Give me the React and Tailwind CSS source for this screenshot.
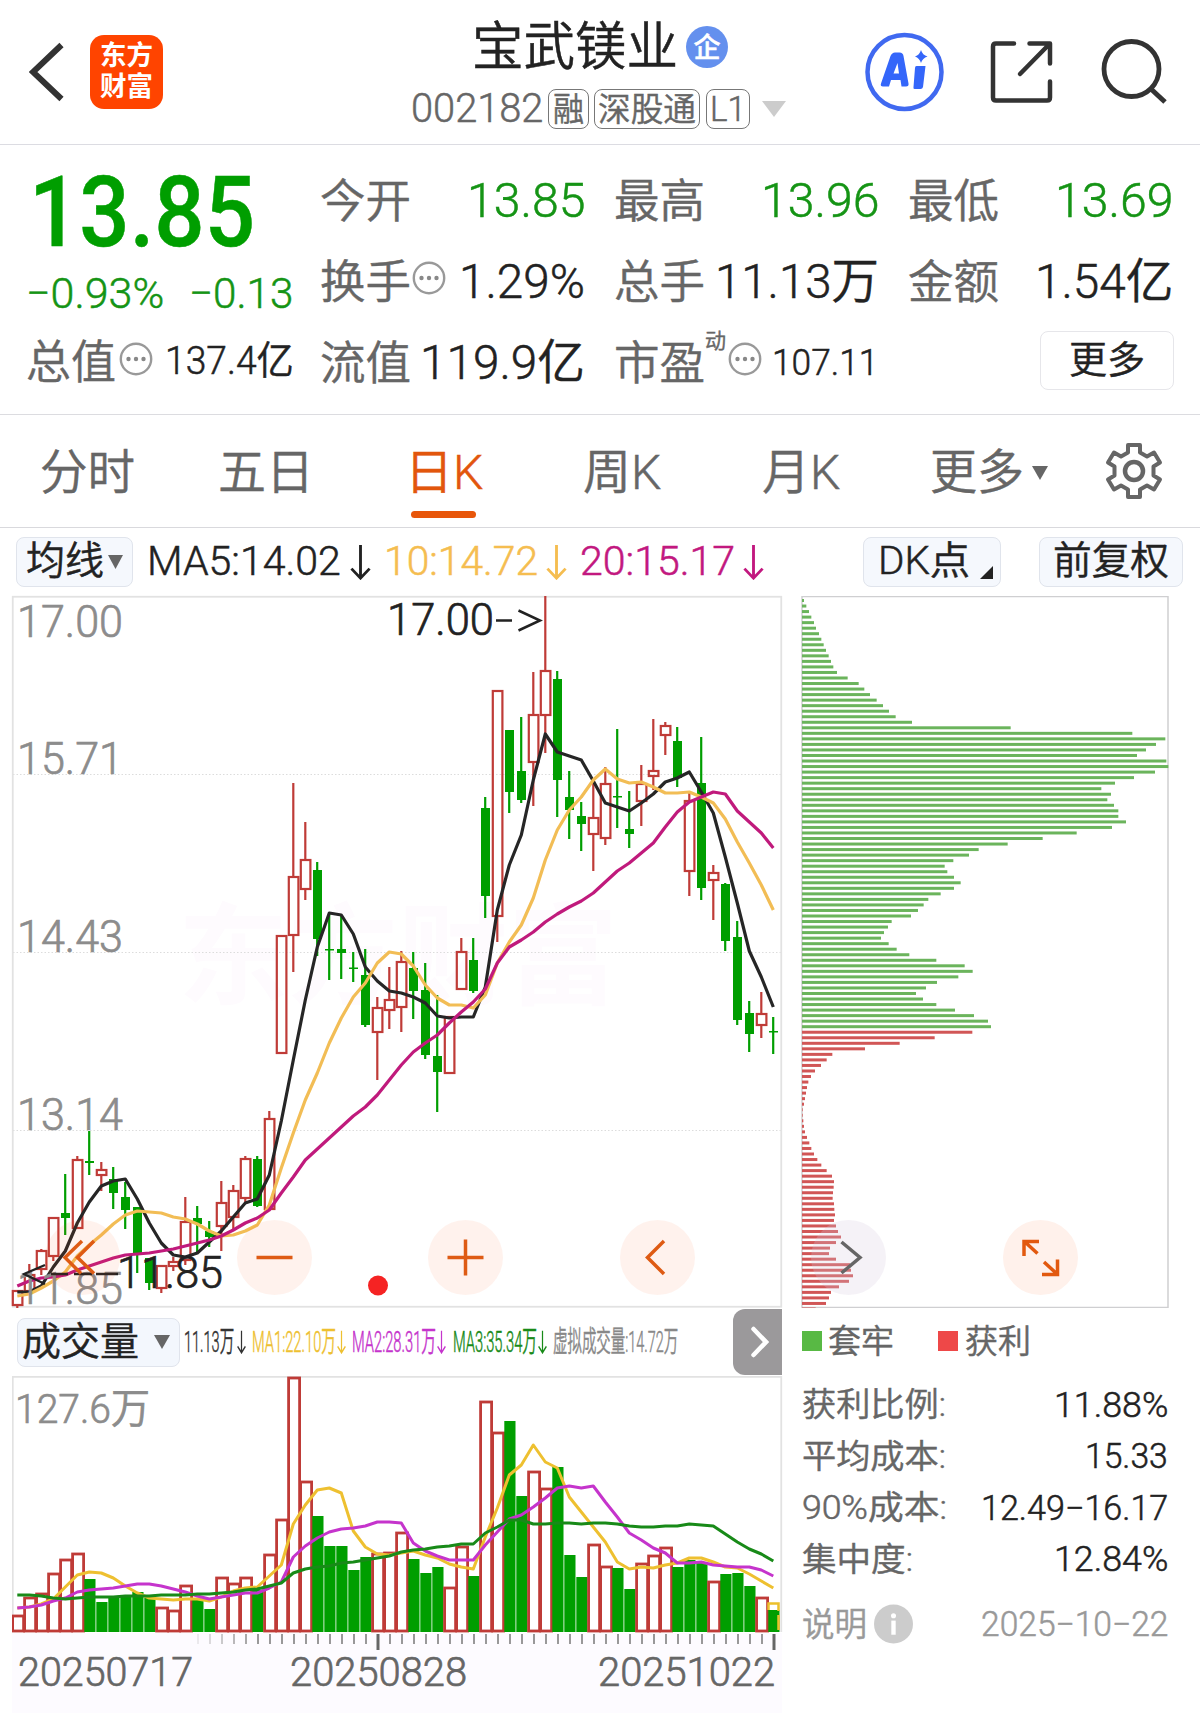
import React, { useLayoutEffect, useRef } from 'react';

// [direction, body top, body bottom, wick top, wick bottom]
const CANDLES = [
    ['r', 1291, 1305, 1290, 1308], ['r', 1275, 1291, 1264, 1293], ['r', 1251, 1269, 1249, 1275], ['r', 1218, 1256, 1218, 1261],
    ['g', 1213, 1218, 1174, 1235], ['r', 1160, 1228, 1156, 1228], ['g', 1161, 1163, 1131, 1175], ['r', 1170, 1175, 1162, 1191],
    ['g', 1179, 1193, 1167, 1209], ['g', 1197, 1210, 1182, 1229], ['g', 1207, 1255, 1207, 1273], ['g', 1258, 1283, 1258, 1290],
    ['r', 1266, 1288, 1266, 1293], ['r', 1262, 1266, 1257, 1271], ['r', 1222, 1260, 1197, 1265], ['g', 1218, 1224, 1206, 1253],
    ['g', 1231, 1237, 1221, 1247], ['r', 1203, 1226, 1181, 1251], ['r', 1191, 1217, 1185, 1229], ['r', 1159, 1198, 1156, 1202],
    ['g', 1159, 1206, 1156, 1207], ['r', 1119, 1209, 1111, 1209], ['r', 936, 1053, 936, 1053], ['r', 877, 935, 783, 972],
    ['r', 860, 889, 822, 900], ['g', 870, 939, 862, 956], ['g', 949, 950, 913, 980], ['g', 949, 953, 915, 979],
    ['g', 967.5, 969, 952, 982], ['g', 975, 1025, 949, 1027], ['r', 1008, 1032, 997, 1080], ['r', 1000, 1010, 967, 1029],
    ['r', 962, 1007, 951, 1032], ['g', 968, 991, 952, 1019], ['g', 990, 1055, 963, 1059], ['g', 1056, 1072, 995, 1112],
    ['r', 1017, 1073, 1017, 1073], ['r', 952, 989, 938, 989], ['g', 960, 991, 938, 993], ['g', 808, 896, 797, 918],
    ['r', 691, 916, 691, 942], ['g', 730, 792, 730, 813], ['g', 771, 800, 717, 803], ['r', 715, 762, 672, 806],
    ['r', 671, 715, 596, 753], ['g', 679, 780, 671, 817], ['g', 797, 810, 771, 839], ['g', 816, 824, 802, 851],
    ['r', 818, 834, 778, 871], ['r', 784, 838, 767, 845], ['g', 796, 797.5, 729, 828], ['g', 829, 834, 791, 848],
    ['r', 784, 801, 765, 826], ['r', 771, 776, 719, 790], ['r', 726, 735, 722, 755], ['g', 741, 778, 727, 787],
    ['r', 801, 871, 793, 896], ['g', 783, 888, 737, 900], ['r', 873, 880, 865, 920], ['g', 884, 941, 883, 951],
    ['g', 937, 1020, 921, 1025], ['g', 1013, 1034, 1001, 1052], ['r', 1014, 1025, 992, 1038], ['g', 1031, 1032.5, 1017, 1054],
];

const MA5 = [1292, 1292, 1286, 1267, 1251, 1223, 1202, 1186, 1181, 1179, 1199, 1223, 1243, 1255, 1257, 1253, 1242, 1231, 1217, 1203, 1199, 1175, 1121, 1060, 1000, 947, 913, 915, 934, 967, 981, 991, 993, 997, 1003, 1016, 1018, 1017, 1017, 987, 910, 865, 835, 780, 734, 752, 756, 760, 781, 803, 807, 811, 803, 794, 782, 778, 772, 792, 813, 857, 903, 951, 977, 1007];
const MA10 = [1296, 1294, 1288, 1281, 1272, 1256, 1245, 1235, 1224, 1215, 1211, 1212, 1213, 1217, 1219, 1224, 1231, 1236, 1235, 1231, 1225, 1205, 1168, 1133, 1100, 1073, 1043, 1018, 997, 983, 963, 952, 954, 966, 985, 998, 1005, 1005, 1008, 995, 963, 942, 925, 898, 860, 830, 810, 797, 780, 769, 779, 783, 782, 787, 793, 793, 792, 797, 803, 819, 842, 863, 885, 910];
const MA20 = [1286, 1281, 1278, 1277, 1275, 1270, 1266, 1262, 1258, 1255, 1254, 1253, 1251, 1249, 1246, 1243, 1240, 1236, 1230, 1223, 1218, 1210, 1193, 1177, 1160, 1149, 1138, 1127, 1116, 1107, 1095, 1080, 1065, 1052, 1043, 1035, 1023, 1012, 1002, 989, 963, 947, 940, 932, 922, 914, 907, 901, 893, 882, 871, 863, 853, 843, 827, 812, 802, 797, 792, 794, 811, 822, 833, 848];

const VOLUME_TOPS = [1615, 1597, 1593, 1573, 1559, 1553, 1579, 1602, 1598, 1597, 1592, 1598, 1607, 1610, 1585, 1600, 1609, 1577, 1583, 1577, 1590, 1554, 1519, 1377, 1481, 1516, 1546, 1546, 1570, 1557, 1553, 1552, 1532, 1559, 1573, 1567, 1587, 1546, 1576, 1401, 1432, 1421, 1496, 1471, 1488, 1467, 1555, 1577, 1544, 1566, 1568, 1589, 1563, 1555, 1547, 1567, 1560, 1563, 1581, 1574, 1573, 1586, 1597, 1610];
const VOLUME_DIRS = 'rrrrrrggggggrrrggrrrgrrrrgggggrrrgggrrgrrggrrgggrrggrrrgggrgggrg';

const VMA1 = [1608, 1607, 1604, 1599, 1587, 1575, 1572, 1573, 1578, 1586, 1593, 1598, 1599, 1600, 1599, 1599, 1601, 1597, 1591, 1588, 1587, 1576, 1565, 1524, 1505, 1490, 1488, 1493, 1531, 1547, 1554, 1555, 1553, 1551, 1555, 1558, 1564, 1567, 1569, 1537, 1508, 1475, 1465, 1445, 1462, 1468, 1497, 1512, 1527, 1542, 1562, 1569, 1567, 1568, 1565, 1563, 1558, 1558, 1562, 1567, 1568, 1574, 1581, 1588];
const VMA2 = [1608, 1607, 1605, 1601, 1598, 1592, 1590, 1589, 1588, 1586, 1584, 1584, 1586, 1589, 1592, 1596, 1599, 1597, 1595, 1593, 1593, 1588, 1582, 1557, 1546, 1538, 1532, 1529, 1528, 1526, 1522, 1522, 1523, 1543, 1551, 1556, 1560, 1560, 1560, 1545, 1532, 1519, 1515, 1507, 1498, 1488, 1486, 1488, 1486, 1502, 1517, 1533, 1540, 1548, 1553, 1563, 1563, 1562, 1565, 1566, 1567, 1567, 1570, 1576];
const VMA3 = [1595, 1595, 1596, 1598, 1599, 1598, 1597, 1597, 1597, 1596, 1596, 1596, 1595, 1595, 1595, 1594, 1594, 1593, 1592, 1590, 1589, 1586, 1583, 1573, 1569, 1567, 1566, 1563, 1562, 1560, 1558, 1556, 1552, 1550, 1549, 1547, 1546, 1544, 1544, 1533, 1527, 1520, 1520, 1524, 1524, 1523, 1523, 1524, 1523, 1523, 1524, 1526, 1527, 1527, 1526, 1526, 1524, 1525, 1526, 1534, 1542, 1549, 1554, 1561];

const CHIPS = [
    42, 49, 57, 64, 72, 78, 87, 94, 101, 108, 116, 123, 130, 141, 173, 206, 223, 240, 260, 279, 297, 317, 366, 662,
    1027, 1126, 1098, 1068, 1041, 1129, 1135, 1095, 1032, 975, 934, 963, 952, 972, 985, 985, 1008, 966, 860, 758, 653,
    566, 537, 490, 464, 472, 492, 512, 492, 452, 415, 401, 384, 363, 305, 294, 282, 273, 296, 320, 358, 439, 524, 548,
    505, 441, 408, 378, 399, 439, 495, 552, 594, 603, 547, 434, 329, 225, 127, 110, 93, 75, 63, 55, 51, 48, 45, 42, 38,
    38, 40, 42, 45, 51, 58, 64, 72, 82, 94, 110, 126, 132, 131, 129, 128, 132, 133, 135, 132, 138, 144, 153, 138, 120,
    117, 138, 180, 183, 189, 177, 147, 123, 117, 108, 77,
];
const TRAPPED_COUNT = 78;

const RED = '#bf3b37';
const GREEN = '#009e00';

const candleX = (i) => 17.3 + i * 12;
const toPoints = (values) => values.map((y, i) => `${candleX(i)},${y}`).join(' ');

// Squeezes or stretches one line of text to the width of its box
const Fit = ({ className = '', children }) => {
    const box = useRef(null);
    const text = useRef(null);

    useLayoutEffect(() => {
        const scale = box.current.clientWidth / text.current.offsetWidth;
        text.current.style.transform = `scaleX(${scale})`;
    }, [children]);

    return (
        <span ref={box} className={`block shrink-0 leading-none ${className}`}>
            <span ref={text} className="inline-block origin-left whitespace-nowrap">{children}</span>
        </span>
    );
};

const MoreDots = ({ className = '' }) => (
    <svg viewBox="0 0 34 34" className={`w-[34px] h-[34px] shrink-0 ${className}`}>
        <circle cx="17" cy="17" r="15.2" fill="none" stroke="#999" strokeWidth="2.4" />
        <circle cx="9.5" cy="17" r="2.2" fill="#888" />
        <circle cx="17" cy="17" r="2.2" fill="#888" />
        <circle cx="24.5" cy="17" r="2.2" fill="#888" />
    </svg>
);

const Caret = ({ className = '' }) => (
    <svg viewBox="0 0 16 14" preserveAspectRatio="none" className={`shrink-0 ${className}`}>
        <path d="M0 0H16L8 14Z" fill="currentColor" />
    </svg>
);

const DownArrow = ({ className = '' }) => (
    <svg viewBox="0 0 22 38" preserveAspectRatio="none" className={`shrink-0 ${className}`}>
        <path d="M11 1V36M1.5 26L11 36L20.5 26" fill="none" stroke="currentColor" strokeWidth="3" />
    </svg>
);

const Header = () => (
    <header className="flex h-[145px] border-b border-[#dcdce2]">
        <div className="flex items-start w-[411px] pl-[29px] shrink-0">
            <svg viewBox="0 0 36 60" className="w-[36px] h-[60px] mt-[42px]">
                <path d="M32.500 3L4 30L32.500 57" fill="none" stroke="#333" strokeWidth="6" />
            </svg>
            <div className="ml-[25px] mt-[35px] w-[73px] h-[74px] rounded-[14px] bg-[#ff4400] text-white font-bold text-[27px] [-webkit-text-stroke:0px] flex flex-col items-center justify-center gap-[4px]">
                <Fit className="w-[53px]">东方</Fit>
                <Fit className="w-[53px]">财富</Fit>
            </div>
        </div>

        <div className="w-[378px] shrink-0">
            <div className="flex items-center pl-[61px] mt-[19px] h-[56px]">
                <Fit className="w-[206px] text-[52px] text-[#222] mt-[1px]">宝武镁业</Fit>
                <div className="ml-[8px] w-[42px] h-[42px] rounded-full bg-[#6490ee] text-white text-[27px] font-medium flex items-center justify-center leading-none">
                    <span className="mt-[2px]">企</span>
                </div>
            </div>
            <div className="flex items-center mt-[14px] h-[40px] text-[#666]">
                <Fit className="w-[132px] text-[41px] -mt-[2px]">002182</Fit>
                <div className="ml-[5px] w-[41px] h-[40px] border border-[#777] rounded-[8px] flex items-center justify-center text-[33px]">
                    <Fit className="w-[31px]">融</Fit>
                </div>
                <div className="ml-[5px] w-[106px] h-[40px] border border-[#777] rounded-[8px] flex items-center justify-center text-[33px]">
                    <Fit className="w-[98px]">深股通</Fit>
                </div>
                <div className="ml-[6px] w-[44px] h-[40px] border border-[#777] rounded-[8px] flex items-center justify-center text-[35px]">
                    <Fit className="w-[36px]">L1</Fit>
                </div>
                <Caret className="ml-[12px] w-[24px] h-[16px] text-[#ccc]" />
            </div>
        </div>

        <div className="flex items-start pl-[76px]">
            <svg viewBox="0 0 80 80" className="w-[80px] h-[80px] mt-[32px]">
                <circle cx="39.500" cy="40" r="37" fill="none" stroke="#4069f0" strokeWidth="4.500" />
                <path fillRule="evenodd" d="M16 51.500L25.500 24Q27 20.500 30 20.500H34.500Q38 20.500 38.500 24L43.500 51.500Q44 54.500 41 54.500H36.500L35.500 48H26L24 54.500H18Q15 54.500 16 51.500ZM28.500 41.500H34L32.500 31Z" fill="#3466fa" />
                <path d="M51.500 34H60.500L58 55Q57.500 57 55.500 57H49.500Q48 57 48.500 55L50 36Q50 34 51.500 34Z" fill="#3466fa" />
                <path d="M56 18Q57.500 23 62.500 24.500Q57.500 26 56 31Q54.500 26 50 24.500Q54.500 23 56 18Z" fill="#3466fa" />
            </svg>
            <svg viewBox="0 0 64 64" className="w-[64px] h-[64px] mt-[40px] ml-[45px]">
                <g fill="none" stroke="#333" strokeWidth="4.500" strokeLinecap="round" strokeLinejoin="round">
                    <path d="M24 3.500H6Q3 3.500 3 6.500V57.500Q3 60.500 6 60.500H57Q60 60.500 60 57.500V41.500" />
                    <path d="M39.500 3.500H60V23.500M59 4.500L30 34" />
                </g>
            </svg>
            <svg viewBox="0 0 68 68" className="w-[68px] h-[68px] mt-[37px] ml-[46px]">
                <circle cx="31.500" cy="32" r="27.500" fill="none" stroke="#333" strokeWidth="4.800" />
                <path d="M51 52L65 65" fill="none" stroke="#333" strokeWidth="5" />
            </svg>
        </div>
    </header>
);

const Cell = ({ children }) => (
    <div className="flex items-center w-[265px] h-[81px] text-[46px] text-[#666]">{children}</div>
);

const Quote = () => (
    <section className="flex h-[270px] pt-[15px] border-b border-[#dcdce0]">
        <div className="w-[320px] shrink-0">
            <div className="h-[106px] flex items-center pl-[29px] text-[#009e00]">
                <Fit className="w-[226px] text-[98px] font-medium">13.85</Fit>
            </div>
            <div className="h-[55px] flex items-center pl-[26px] text-[43px] text-[#159415]">
                <Fit className="w-[138px]">−0.93%</Fit>
                <Fit className="w-[104px] ml-[25px]">−0.13</Fit>
            </div>
            <div className="h-[81px] flex items-center pl-[26px] text-[#666]">
                <Fit className="w-[90px] text-[46px]">总值</Fit>
                <MoreDots className="ml-[3px] -mt-[6px]" />
                <Fit className="w-[129px] ml-[12px] text-[39px] text-[#222]">137.4亿</Fit>
            </div>
        </div>

        <div className="grid grid-cols-[294px_294px_294px] content-start">
            <Cell>
                <Fit className="w-[91px]">今开</Fit>
                <Fit className="w-[118px] ml-auto text-[49px] text-[#159415]">13.85</Fit>
            </Cell>
            <Cell>
                <Fit className="w-[91px]">最高</Fit>
                <Fit className="w-[118px] ml-auto text-[49px] text-[#159415]">13.96</Fit>
            </Cell>
            <Cell>
                <Fit className="w-[91px]">最低</Fit>
                <Fit className="w-[118px] ml-auto text-[49px] text-[#159415]">13.69</Fit>
            </Cell>
            <Cell>
                <Fit className="w-[91px]">换手</Fit>
                <MoreDots className="ml-[1px] -mt-[8px]" />
                <Fit className="w-[126px] ml-auto text-[48px] text-[#222]">1.29%</Fit>
            </Cell>
            <Cell>
                <Fit className="w-[91px]">总手</Fit>
                <Fit className="w-[164px] ml-auto text-[48px] text-[#222]">11.13万</Fit>
            </Cell>
            <Cell>
                <Fit className="w-[91px]">金额</Fit>
                <Fit className="w-[138px] ml-auto text-[48px] text-[#222]">1.54亿</Fit>
            </Cell>
            <Cell>
                <Fit className="w-[91px]">流值</Fit>
                <Fit className="w-[165px] ml-auto text-[48px] text-[#222]">119.9亿</Fit>
            </Cell>
            <Cell>
                <Fit className="w-[91px]">市盈</Fit>
                <span className="text-[21px] leading-none self-start mt-[9px]">动</span>
                <MoreDots className="ml-[2px] -mt-[8px]" />
                <Fit className="w-[106px] ml-[10px] text-[37px] text-[#222]">107.11</Fit>
            </Cell>
            <div className="flex items-center h-[81px] pl-[132px]">
                <button className="w-[134px] h-[59px] -mt-[5px] border border-[#e6e6ea] rounded-[8px] text-[38px] text-[#222] flex items-center justify-center">
                    <Fit className="w-[76px]">更多</Fit>
                </button>
            </div>
        </div>
    </section>
);

const Tabs = () => (
    <nav className="flex h-[113px] border-b border-[#d9d9dd] text-[48px] text-[#666] pl-[40px]">
        <div className="w-[178px] pt-[34px]"><Fit className="w-[95px]">分时</Fit></div>
        <div className="w-[187px] pt-[34px]"><Fit className="w-[96px]">五日</Fit></div>
        <div className="w-[178px] pt-[34px] text-[#e2560c]">
            <Fit className="w-[78px]">日K</Fit>
            <div className="w-[65px] h-[7px] mt-[14px] ml-[6px] rounded-full bg-[#e8560a]"></div>
        </div>
        <div className="w-[179px] pt-[34px]"><Fit className="w-[78px]">周K</Fit></div>
        <div className="w-[168px] pt-[34px]"><Fit className="w-[78px]">月K</Fit></div>
        <div className="w-[174px] pt-[34px] flex items-start">
            <Fit className="w-[94px]">更多</Fit>
            <Caret className="w-[16px] h-[14px] mt-[17px] ml-[8px]" />
        </div>
        <svg viewBox="-30 -30 60 60" className="w-[60px] h-[60px] mt-[26px]">
            <path d="M-6 -26H6V-18.500L13 -14.500L20 -18.500L26 -8.500L19.500 -4.500V4.500L26 8.500L20 18.500L13 14.500L6 18.500V26H-6V18.500L-13 14.500L-20 18.500L-26 8.500L-19.500 4.500V-4.500L-26 -8.500L-20 -18.500L-13 -14.500L-6 -18.500Z" fill="none" stroke="#666" strokeWidth="4" strokeLinejoin="round" />
            <circle r="9" fill="none" stroke="#666" strokeWidth="4.5" />
        </svg>
    </nav>
);

const Indicators = () => (
    <div className="flex items-center h-[68px] pl-[16px] pb-[1px] text-[40px] text-[#222]">
        <button className="w-[117px] h-[50px] border border-[#e0e4ec] rounded-[8px] bg-[#f5f8fd] flex items-center pl-[9px] text-[39px]">
            <Fit className="w-[78px]">均线</Fit>
            <Caret className="w-[15px] h-[14px] ml-[4px] text-[#666]" />
        </button>
        <Fit className="w-[194px] ml-[14px]">MA5:14.02</Fit>
        <DownArrow className="w-[21px] h-[36px] ml-[9px] mr-[13px]" />
        <Fit className="w-[154px] text-[#f5bd50]">10:14.72</Fit>
        <DownArrow className="w-[21px] h-[36px] ml-[8px] mr-[13px] text-[#f5bd50]" />
        <Fit className="w-[155px] text-[#c2187f]">20:15.17</Fit>
        <DownArrow className="w-[21px] h-[36px] ml-[8px] text-[#c2187f]" />
        <button className="w-[138px] h-[50px] ml-[99px] border border-[#e0e4ec] rounded-[8px] bg-[#f5f8fd] flex items-center pl-[13px] text-[39px]">
            <Fit className="w-[92px]">DK点</Fit>
            <svg viewBox="0 0 13 13" className="w-[13px] h-[13px] ml-[11px] mt-[22px]">
                <path d="M13 0V13H0Z" fill="#222" />
            </svg>
        </button>
        <button className="w-[144px] h-[50px] ml-[38px] border border-[#e0e4ec] rounded-[8px] bg-[#f5f8fd] flex items-center justify-center text-[39px]">
            <Fit className="w-[116px]">前复权</Fit>
        </button>
    </div>
);

const AxisLabel = ({ x = 17, y, width = 106, fill = '#8c8c8c', size = 43.5, children }) => (
    <text x={x} y={y} fontSize={size} fill={fill} stroke={fill} strokeWidth="0.7" textLength={width} lengthAdjust="spacingAndGlyphs">{children}</text>
);

const RoundButton = ({ className, children }) => (
    <button className={`absolute top-[624px] w-[75px] h-[75px] rounded-full bg-[#ff5a1e]/8 ${className}`}>
        <svg viewBox="0 0 75 75" className="w-full h-full" fill="none" stroke="#de5b14" strokeWidth="3.5">{children}</svg>
    </button>
);

const PriceChart = () => (
    <div className="relative h-[712px]">
        <svg viewBox="12 596 771 712" className="block w-[771px] h-[712px] overflow-visible">
            <text x="178" y="996" fontSize="110" fontWeight="bold" fill="#fefbfe" textLength="440">东方财富</text>
            {[774, 952, 1130].map((y) => (
                <path key={y} d={`M13 ${y}.500H781`} stroke="#dcdcdc" strokeDasharray="1.500 2" />
            ))}
            <rect x="12.750" y="596.750" width="768.500" height="710" fill="none" stroke="#e2e2e2" strokeWidth="1.800" />
            <AxisLabel y={637}>17.00</AxisLabel>
            <AxisLabel y={774}>15.71</AxisLabel>
            <AxisLabel y={952}>14.43</AxisLabel>
            <AxisLabel y={1130}>13.14</AxisLabel>

            {CANDLES.map(([dir, top, bottom, high, low], i) => {
                const x = candleX(i);
                if (dir === 'g') {
                    return (
                        <g key={i} fill={GREEN}>
                            <rect x={x - 1.200} y={high} width="2.200" height={low - high} />
                            <rect x={x - 4.300} y={top} width="9" height={Math.max(bottom - top, 1.500)} />
                        </g>
                    );
                }
                return (
                    <g key={i} stroke={RED} strokeWidth="2.200" fill="none">
                        <path d={`M${x} ${high}V${top}M${x} ${bottom}V${low}`} />
                        <rect x={x - 4.500} y={top} width="9.600" height={bottom - top} />
                    </g>
                );
            })}

            <g fill="none" strokeWidth="3.200" strokeLinejoin="round">
                <polyline points={toPoints(MA5)} stroke="#262626" />
                <polyline points={toPoints(MA10)} stroke="#f2bd55" />
                <polyline points={toPoints(MA20)} stroke="#c01a7c" />
            </g>

            <AxisLabel x={387} y={635} width={107} fill="#222">17.00</AxisLabel>
            <path d="M496 620.500H512M518.500 610.500L540 620.500L518.500 630.500" fill="none" stroke="#222" strokeWidth="2.500" />

            <AxisLabel y={1304}>11.85</AxisLabel>
            <AxisLabel x={117} y={1288} width={106} fill="#222">11.85</AxisLabel>
            <path d="M45 1265L24 1274L45 1284M51 1274H68M74 1274H92M96 1274H118" fill="none" stroke="#222" strokeWidth="2.300" />
            <circle cx="378" cy="1285.500" r="10" fill="#f52323" />
        </svg>

        <RoundButton className="left-[33px]">
            <path d="M37 21L20 37.500L36 53.500M49 21L32.500 37.500L49 53.500" />
        </RoundButton>
        <RoundButton className="left-[225px]">
            <path d="M19.500 37.500H55.500" />
        </RoundButton>
        <RoundButton className="left-[416px]">
            <path d="M19.500 37.500H55.500M37.500 19.500V55.500" />
        </RoundButton>
        <RoundButton className="left-[608px]">
            <path d="M44 21L27.500 37.500L44 54" />
        </RoundButton>
    </div>
);

const VolumeBar = () => (
    <div className="flex items-center h-[68px] pl-[5px] text-[29px]">
        <button className="w-[163px] h-[49px] border border-[#e0e4ec] rounded-[8px] bg-[#f3f7fd] flex items-center pl-[4px] text-[39px] text-[#222]">
            <Fit className="w-[117px]">成交量</Fit>
            <Caret className="w-[16px] h-[14px] ml-[15px] text-[#666]" />
        </button>
        <Fit className="w-[50px] ml-[4px] text-[#333]">11.13万</Fit>
        <DownArrow className="w-[9px] h-[24px] ml-[3px] text-[#333]" />
        <Fit className="w-[84px] ml-[6px] text-[#eec030]">MA1:22.10万</Fit>
        <DownArrow className="w-[9px] h-[24px] ml-[1px] text-[#eec030]" />
        <Fit className="w-[84px] ml-[6px] text-[#c534cc]">MA2:28.31万</Fit>
        <DownArrow className="w-[9px] h-[24px] ml-[1px] text-[#c534cc]" />
        <Fit className="w-[84px] ml-[7px] text-[#188a18]">MA3:35.34万</Fit>
        <DownArrow className="w-[9px] h-[24px] ml-[1px] text-[#188a18]" />
        <Fit className="w-[125px] ml-[6px] text-[#888]">虚拟成交量:14.72万</Fit>
        <div className="ml-auto mr-[1px] w-[49px] h-[66px] rounded-l-[12px] bg-[#9b999b] flex items-center justify-center pl-[4px]">
            <svg viewBox="0 0 18 32" className="w-[18px] h-[32px]">
                <path d="M2.500 3L15 16L2.500 29" fill="none" stroke="#fff" strokeWidth="4.500" strokeLinecap="round" />
            </svg>
        </div>
    </div>
);

const VolumeChart = () => (
    <svg viewBox="12 1376 771 337" className="block w-[771px] h-[337px]">
        <rect x="12" y="1633" width="770" height="80" fill="#fdfbff" />
        <path d="M12.750 1632V1376.750H781.250V1632" fill="none" stroke="#e2e2e2" strokeWidth="1.800" />
        <AxisLabel x={15} y={1423} size={41} width={135}>127.6万</AxisLabel>

        {VOLUME_TOPS.map((top, i) => {
            const x = candleX(i) - 5;
            if (VOLUME_DIRS[i] === 'g') {
                return <rect key={i} x={x} y={top} width="11.200" height={1632 - top} fill={GREEN} />;
            }
            return <rect key={i} x={x + 0.300} y={top + 1} width="11" height={1630 - top} fill="#fff" stroke={RED} strokeWidth="2.800" />;
        })}
        <path d="M768.500 1610V1603.500H778.500V1630" fill="none" stroke="#ecc02c" strokeWidth="2.500" strokeDasharray="24 4" />

        <g fill="none" strokeWidth="3" strokeLinejoin="round">
            <polyline points={toPoints(VMA1)} stroke="#eec030" />
            <polyline points={toPoints(VMA2)} stroke="#c534cc" />
            <polyline points={toPoints(VMA3)} stroke="#188a18" />
        </g>

        {Array.from({ length: 49 }, (_, n) => n + 15).map((i) => {
            const major = i === 30 || i === 63;
            return (
                <path
                    key={i}
                    d={`M${candleX(i) + 0.700} 1634V${major ? 1650 : 1644}`}
                    stroke={major ? '#666' : '#777'}
                    strokeWidth={major ? 3 : 1.500}
                    opacity={Math.min(1, (i - 14) / 6)}
                />
            );
        })}
        <AxisLabel x={18} y={1686} size={41} width={175} fill="#666">20250717</AxisLabel>
        <AxisLabel x={290} y={1686} size={41} width={177} fill="#666">20250828</AxisLabel>
        <AxisLabel x={598} y={1686} size={41} width={177} fill="#666">20251022</AxisLabel>
    </svg>
);

const ChipChart = () => (
    <div className="relative h-[712px]">
        <svg viewBox="801 596 368 712" className="block w-[368px] h-[712px]">
            <path d="M802 596.500H1168V1307.500H802Z" fill="none" stroke="#cfcfd1" strokeWidth="1.500" />
            {CHIPS.map((end, i) => (
                <rect
                    key={i}
                    x="802"
                    y={599 + i * 5.535}
                    width={(end - 36) / 3}
                    height="3"
                    fill={i < TRAPPED_COUNT ? '#6bb45c' : '#d15656'}
                />
            ))}
        </svg>
        <button className="absolute left-[10px] top-[624px] w-[75px] h-[75px] rounded-full bg-[#d8cce0]/25">
            <svg viewBox="0 0 75 75" className="w-full h-full">
                <path d="M30.500 22L49 37.500L30.500 53" fill="none" stroke="#666" strokeWidth="3.500" />
            </svg>
        </button>
        <button className="absolute left-[202px] top-[624px] w-[75px] h-[75px] rounded-full bg-[#fff1eb]">
            <svg viewBox="0 0 75 75" className="w-full h-full">
                <path d="M36 21.500H21V36M22 22L34.500 33.500M39 54.500H54.500V39.500M53.500 53.500L41 42" fill="none" stroke="#e2590f" strokeWidth="3.500" />
            </svg>
        </button>
    </div>
);

const StatRow = ({ label, labelClass, value, valueClass }) => (
    <div className="flex items-center justify-between h-[51.500px] w-[366px]">
        <Fit className={`text-[#666] ${labelClass}`}>{label}</Fit>
        <Fit className={`text-[34.500px] text-[#222] ${valueClass}`}>{value}</Fit>
    </div>
);

const ChipStats = () => (
    <div className="pl-[1px] text-[33px]">
        <div className="flex items-center h-[66px] text-[#666]">
            <div className="w-[20px] h-[20px] bg-[#58b944]"></div>
            <Fit className="w-[66px] ml-[6px]">套牢</Fit>
            <div className="w-[20px] h-[20px] ml-[44px] bg-[#ee4848]"></div>
            <Fit className="w-[66px] ml-[7px]">获利</Fit>
        </div>
        <div className="mt-[5px]">
            <StatRow label="获利比例:" labelClass="w-[144px]" value="11.88%" valueClass="w-[114px]" />
            <StatRow label="平均成本:" labelClass="w-[144px]" value="15.33" valueClass="w-[83px]" />
            <StatRow label="90%成本:" labelClass="w-[145px]" value="12.49−16.17" valueClass="w-[187px]" />
            <StatRow label="集中度:" labelClass="w-[111px]" value="12.84%" valueClass="w-[114px]" />
        </div>
        <div className="flex items-center h-[40px] mt-[19px] w-[366px] text-[#999]">
            <Fit className="w-[65px]">说明</Fit>
            <svg viewBox="0 0 40 40" className="w-[39px] h-[40px] ml-[7px]">
                <circle cx="20" cy="20" r="20" fill="#ccc" />
                <circle cx="20" cy="11.500" r="2.600" fill="#fff" />
                <path d="M20 16.500V31" stroke="#fff" strokeWidth="4.500" />
            </svg>
            <Fit className="w-[187px] ml-auto text-[34.500px]">2025−10−22</Fit>
        </div>
    </div>
);

const App = () => (
    <div className="w-[1200px] h-[1713px] overflow-hidden bg-white font-[350] [-webkit-text-stroke:0.5px] font-[Roboto,'Noto_Sans_CJK_SC',sans-serif]">
        <Header />
        <Quote />
        <Tabs />
        <Indicators />
        <main className="flex pl-[12px]">
            <div className="w-[771px] shrink-0">
                <PriceChart />
                <VolumeBar />
                <VolumeChart />
            </div>
            <div className="w-[368px] ml-[18px] shrink-0">
                <ChipChart />
                <ChipStats />
            </div>
        </main>
    </div>
);

export default App;
